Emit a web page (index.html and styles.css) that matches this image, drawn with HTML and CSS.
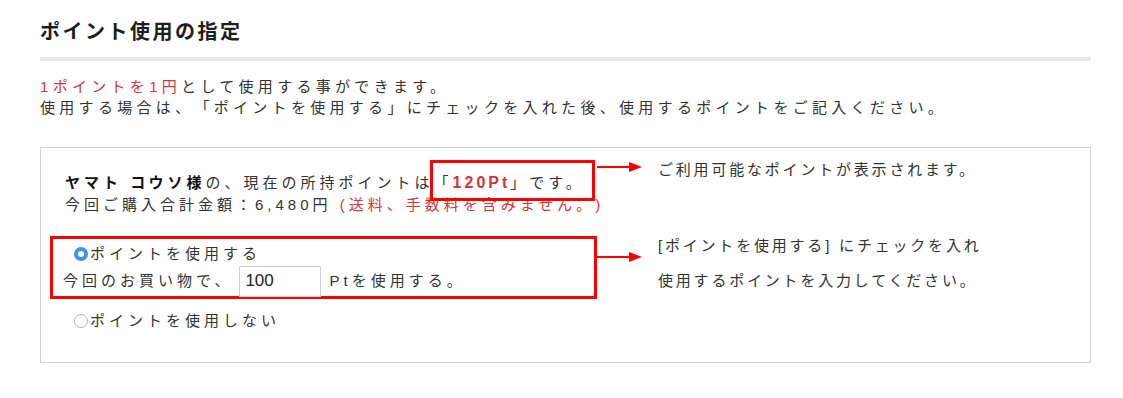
FILE: index.html
```html
<!DOCTYPE html>
<html lang="ja">
<head>
  <meta charset="UTF-8">
  <meta name="viewport" content="width=device-width, initial-scale=1.0">
  <title>ポイント使用の指定</title>
  <link rel="stylesheet" href="styles.css">
</head>
<body>
  <div class="page">
    <h2 class="page-title">ポイント使用の指定</h2>

    <p class="lead">
      <span class="red">1ポイントを1円</span>として使用する事ができます。<br>
      使用する場合は、「ポイントを使用する」にチェックを入れた後、使用するポイントをご記入ください。
    </p>

    <div class="point-box">
      <!-- current points -->
      <div class="point-row">
        <div class="point-left info">
          <b>ヤマト コウソ様</b>の、現在の所持ポイントは<span class="mark">「<b class="red">120Pt</b>」です。</span><br>
          今回ご購入合計金額：6,480円 <span class="red">(送料、手数料を含みません。)</span>
        </div>
        <svg class="arrow" width="46" height="12" viewBox="0 0 46 12">
          <line x1="0" y1="6" x2="36" y2="6" stroke="#f00" stroke-width="2"/>
          <polygon points="32,1 45,6 32,11" fill="#f00"/>
        </svg>
        <p class="note note-one">ご利用可能なポイントが表示されます。</p>
      </div>

      <!-- use points -->
      <div class="point-row row-use">
        <div class="point-left use-box">
          <label class="radio-line"><input type="radio" name="use" checked>ポイントを使用する</label>
          <div class="amount-line">
            今回のお買い物で、<input type="text" class="amount" value="100"> Ptを使用する。
          </div>
        </div>
        <svg class="arrow arrow-two" width="46" height="12" viewBox="0 0 46 12">
          <line x1="0" y1="6" x2="36" y2="6" stroke="#f00" stroke-width="2"/>
          <polygon points="32,1 45,6 32,11" fill="#f00"/>
        </svg>
        <p class="note note-two">[ポイントを使用する] にチェックを入れ<br>使用するポイントを入力してください。</p>
      </div>

      <label class="radio-line no-use"><input type="radio" name="use">ポイントを使用しない</label>
    </div>
  </div>
</body>
</html>
```

FILE: styles.css
```css
/* Reset */
* {
  margin: 0;
  padding: 0;
  box-sizing: border-box;
}

body {
  font-family: "Liberation Sans", "Noto Sans CJK JP", sans-serif;
  color: #333;
  background: #fff;
  text-spacing-trim: space-all;
}

.page {
  width: 1091px;
  padding: 18px 0 0 40px;
}

.red {
  color: #d6333b;
}

/* Title */
.page-title {
  font-size: 20px;
  line-height: 28px;
  font-weight: bold;
  color: #1e1e1e;
  letter-spacing: 2.5px;
  padding-bottom: 11px;
  border-bottom: 4px solid #e9e9ed;
}

.lead {
  margin-top: 15px;
  font-size: 15px;
  line-height: 21px;
  letter-spacing: 4.3px;
}

/* Points box */
.point-box {
  margin-top: 29px;
  border: 1px solid #d2d2d2;
  padding: 12px 0 30px 9px;
}

.point-row {
  display: flex;
  align-items: flex-start;
}

.point-left {
  width: 547px;
  flex-shrink: 0;
}

.info {
  padding: 12px 0 0 15px;
  font-size: 15px;
  line-height: 22px;
  letter-spacing: 4px;
  white-space: nowrap;
  color: #333;
}

.info b {
  color: #111;
}

.info b.red {
  color: #d6333b;
  font-size: 16px;
  letter-spacing: 3px;
}

.mark {
  position: relative;
}

.mark::after {
  content: "";
  position: absolute;
  left: -4px;
  right: -10px;
  top: -14px;
  height: 35px;
  border: 3px solid #f00;
}

.arrow {
  flex-shrink: 0;
  margin-top: 1px;
}

.note {
  margin-left: 15px;
  font-size: 15px;
  letter-spacing: 2.8px;
  white-space: nowrap;
  color: #333;
}

.note-one {
  line-height: 22px;
  margin-top: -1px;
}

.row-use {
  margin-top: 20px;
}

.use-box {
  border: 3px solid #f00;
  padding: 4px 0 0 10px;
  height: 63px;
  font-size: 15px;
  letter-spacing: 4px;
}

.arrow-two {
  margin-top: 15px;
}

.note-two {
  line-height: 35px;
  margin-top: -8px;
}

/* Radios */
.radio-line {
  display: flex;
  align-items: center;
  font-size: 15px;
  line-height: 22px;
  letter-spacing: 4px;
}

.radio-line input {
  appearance: none;
  width: 14px;
  height: 14px;
  margin: 0 2px 0 11px;
  border-radius: 50%;
  border: 1px solid #b5b5b5;
  background: #fff;
}

.radio-line input:checked {
  border: 4px solid #3d93f5;
  background: #fff;
}

.no-use input {
  margin-left: 24px;
}

.amount-line {
  margin-top: 1px;
  line-height: 29px;
}

.amount {
  width: 82px;
  height: 31px;
  border: 1px solid #d0d0d0;
  padding: 0 5px;
  font-family: "Liberation Sans", sans-serif;
  font-size: 17px;
  color: #222;
  vertical-align: middle;
  margin: -2px 0 0 6px;
}

.no-use {
  margin-top: 11px;
}
```
